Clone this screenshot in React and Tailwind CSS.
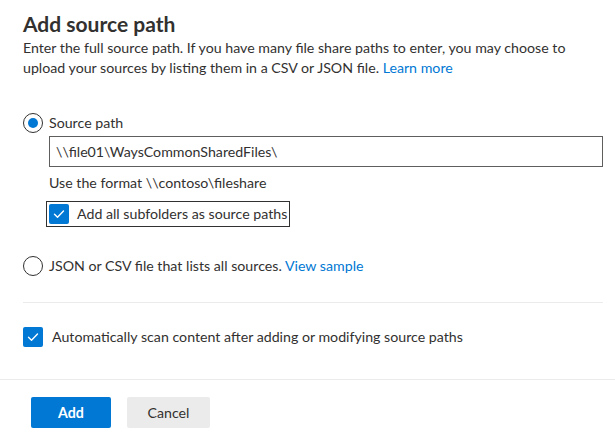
import React from "react";

const CheckBox = () => (
  <span className="flex h-[20px] w-[20px] shrink-0 items-center justify-center rounded-[2px] bg-[#0078d4]">
    <svg width="14" height="14" viewBox="0 0 14 14" fill="none">
      <path d="M2.5 7.2l3 3 6-6.2" stroke="white" strokeWidth="1.4" strokeLinecap="round" strokeLinejoin="round" />
    </svg>
  </span>
);

const Radio = ({ checked }) => (
  <span className="flex h-[20px] w-[20px] shrink-0 items-center justify-center rounded-full border border-[#323130] bg-white">
    {checked && <span className="h-[10px] w-[10px] rounded-full bg-[#0078d4]" />}
  </span>
);

export default function App() {
  return (
    <div className="h-[445px] w-[615px] overflow-hidden bg-white text-[14.2px] text-[#323130] font-['Lato','Liberation_Sans',sans-serif]">
      <div className="pl-[23px] pr-[12px] pt-[10px]">
        <h2 className="text-[21px] font-bold leading-[28px] text-[#323130]">
          Add source path
        </h2>
        <p className="leading-[20px]">
          Enter the full source path. If you have many file share paths to enter, you may choose to upload your sources by listing them in a CSV or JSON file.{" "}
          <a className="text-[#0078d4]">Learn more</a>
        </p>

        <div className="mt-[35px] flex h-[20px] items-center gap-[6px]">
          <Radio checked />
          <span>Source path</span>
        </div>
        <div className="ml-[26px]">
          <div className="mt-[3px] flex h-[31px] items-center border border-[#605e5c] px-[6px]">
            <span>\\file01\WaysCommonSharedFiles\</span>
          </div>
          <div className="mt-[6px] leading-[20px]">Use the format \\contoso\fileshare</div>
          <div className="ml-[-3px] mt-[8px] flex h-[26px] w-fit items-center gap-[8px] border border-[#323130] pl-[2px] pr-[2px]">
            <CheckBox />
            <span>Add all subfolders as source paths</span>
          </div>
        </div>

        <div className="mt-[29px] flex h-[20px] items-center gap-[6px]">
          <Radio />
          <span>
            JSON or CSV file that lists all sources. <a className="text-[#0078d4]">View sample</a>
          </span>
        </div>

        <div className="mt-[26px] h-px bg-[#edebe9]" />

        <div className="mt-[24px] flex h-[20px] items-center gap-[9px]">
          <CheckBox />
          <span>Automatically scan content after adding or modifying source paths</span>
        </div>
      </div>

      <div className="mt-[32px] h-px bg-[#edebe9]" />

      <div className="mt-[17px] flex gap-[16px] pl-[31px]">
        <button className="h-[31px] w-[80px] rounded-[2px] bg-[#0078d4] font-bold text-white">Add</button>
        <button className="h-[31px] w-[83px] rounded-[2px] bg-[#ebebeb] text-[#323130]">Cancel</button>
      </div>
    </div>
  );
}
